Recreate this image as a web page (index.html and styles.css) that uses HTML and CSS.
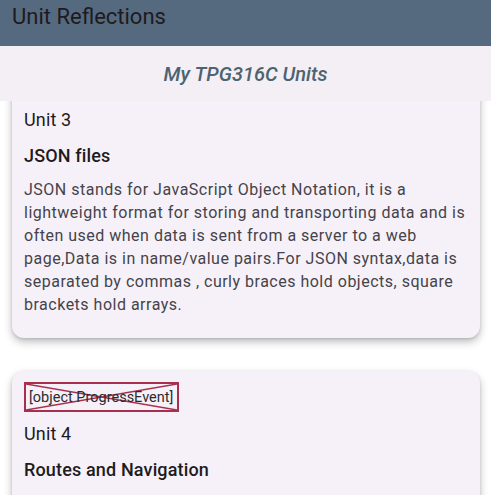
FILE: index.html
```html
<!DOCTYPE html>
<html>
<head>
<meta charset="utf-8">
<link rel="stylesheet" href="styles.css">
</head>
<body>
<div class="app">
  <header class="appbar">Unit Reflections</header>
  <div class="subheader">My TPG316C Units</div>
  <main class="list">
    <div class="scroll">
      <section class="card">
        <div class="broken">
          <svg class="cross" viewBox="0 0 154 29" preserveAspectRatio="none"><line x1="0" y1="0" x2="154" y2="29"/><line x1="0" y1="29" x2="154" y2="0"/></svg>
          <span>[object ProgressEvent]</span>
        </div>
        <h2 class="unit">Unit 3</h2>
        <h3 class="topic">JSON files</h3>
        <p class="body">JSON stands for JavaScript Object Notation, it is a lightweight format for storing and transporting data and is often used when data is sent from a server to a web page,Data is in name/value pairs.For JSON syntax,data is separated by commas , curly braces hold objects, square brackets hold arrays.</p>
      </section>
      <section class="card card-last">
        <div class="broken">
          <svg class="cross" viewBox="0 0 154 29" preserveAspectRatio="none"><line x1="0" y1="0" x2="154" y2="29"/><line x1="0" y1="29" x2="154" y2="0"/></svg>
          <span>[object ProgressEvent]</span>
        </div>
        <h2 class="unit">Unit 4</h2>
        <h3 class="topic">Routes and Navigation</h3>
      </section>
    </div>
  </main>
</div>
</body>
</html>
```
FILE: styles.css
```css
* { box-sizing: border-box; }
html, body { margin: 0; padding: 0; }
body {
  font-family: Roboto, "Noto Sans", sans-serif;
  background: #ffffff;
  width: 491px;
  height: 495px;
  overflow: hidden;
}
.app {
  display: flex;
  flex-direction: column;
  height: 495px;
}
.appbar {
  height: 46px;
  background: #566a7f;
  color: #1d1b20;
  font-size: 22px;
  line-height: 34px;
  padding-left: 12px;
  flex: none;
}
.subheader {
  height: 55px;
  background: #f3eff5;
  color: #4c6370;
  font-size: 20px;
  font-style: italic;
  font-weight: 500;
  display: flex;
  align-items: center;
  justify-content: center;
  flex: none;
  position: relative;
  z-index: 2;
}
.list {
  flex: 1;
  overflow: hidden;
  position: relative;
}
.scroll {
  margin-top: -44px;
  padding: 0 11px 0 12px;
  display: flex;
  flex-direction: column;
  gap: 33px;
}
.card {
  background: #f6f1f9;
  border-radius: 12px;
  box-shadow: 0 4px 8px rgba(0,0,0,0.25), 0 1px 3px rgba(0,0,0,0.12);
  padding: 11px 12px 22px 12px;
  display: flex;
  flex-direction: column;
}
.card-last { min-height: 160px; }
.broken {
  position: relative;
  align-self: flex-start;
  border: 2px solid #a8304c;
  height: 30px;
  width: 155px;
  display: flex;
  align-items: center;
  padding-left: 3px;
  font-size: 14.5px;
  color: #2b2b2b;
}
.cross {
  position: absolute;
  left: 0;
  top: 0;
  width: 100%;
  height: 100%;
}
.cross line {
  stroke: #a8304c;
  stroke-width: 1.5;
  vector-effect: non-scaling-stroke;
}
.broken span { position: relative; white-space: nowrap; }
.unit {
  margin: 10px 0 0 0;
  font-size: 18px;
  font-weight: 400;
  line-height: 24px;
  letter-spacing: 0.15px;
  color: #1d1b20;
}
.topic {
  margin: 12px 0 0 0;
  font-size: 18px;
  font-weight: 500;
  line-height: 24px;
  letter-spacing: 0.15px;
  color: #1d1b20;
}
.body {
  margin: 10px 0 0 0;
  font-size: 16px;
  line-height: 23px;
  letter-spacing: 0.5px;
  color: #45434a;
}
```
